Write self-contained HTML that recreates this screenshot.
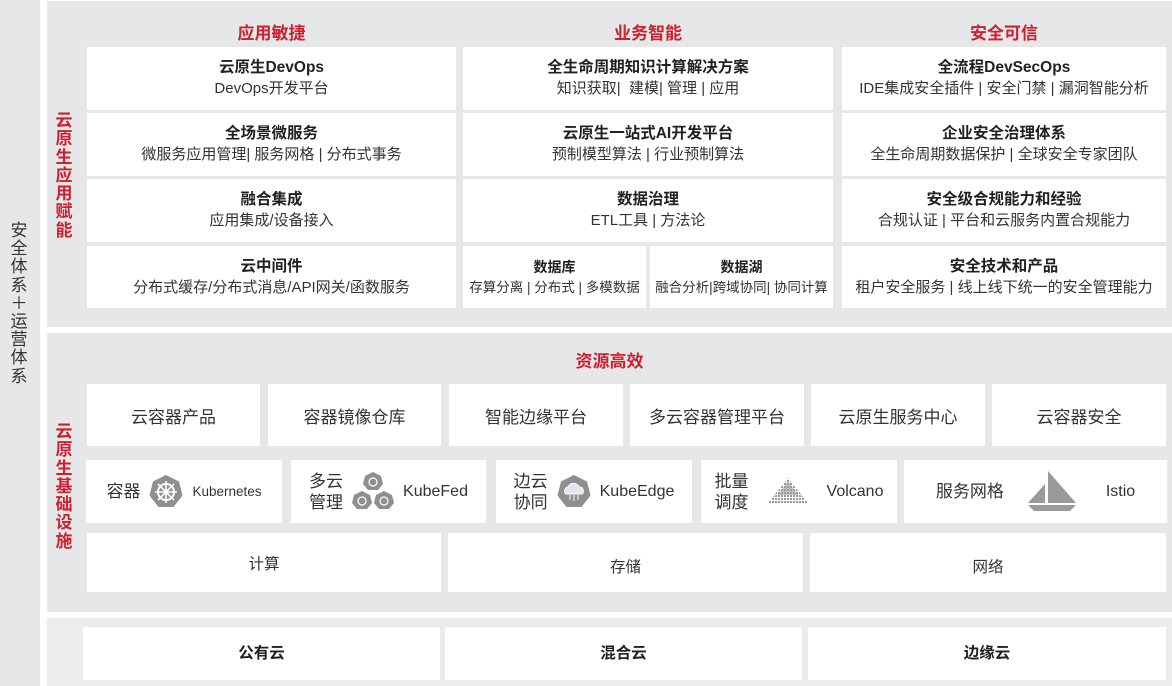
<!DOCTYPE html>
<html><head><meta charset="utf-8"><style>
*{margin:0;padding:0;box-sizing:border-box}
body{width:1172px;height:686px;background:#fff;position:relative;overflow:hidden;font-family:"Liberation Sans","Noto Sans CJK SC",sans-serif;color:#231f20}
.g{position:absolute;background:#e6e7e8}
.b{position:absolute;background:#fff;display:flex;flex-direction:column;align-items:center;justify-content:center;text-align:center;white-space:nowrap}
.t{font-weight:bold;font-size:15.5px;line-height:21px}
.s{font-size:15px;line-height:22px;color:#333}
.s2{font-size:13.5px;line-height:20px;color:#333}
.h{position:absolute;color:#cf1f2e;font-weight:bold;font-size:17px;text-align:center}
.v{position:absolute;width:22px;font-size:17px;line-height:18.3px;text-align:center}
.r{font-size:17px;color:#333}
.row{flex-direction:row;gap:8px}
.lb{font-size:17px;line-height:21px;color:#333;text-align:left}
.en{font-size:16px;color:#333}
</style></head><body>
<div class="g" style="left:0;top:0;width:40px;height:686px"></div>
<div class="v" style="left:8px;top:222px;color:#333;font-size:17px;line-height:18.2px">安全体系＋运营体系</div>
<div class="g" style="left:47px;top:1px;width:1125px;height:326px"></div>
<div class="g" style="left:47px;top:333px;width:1125px;height:279px"></div>
<div class="g" style="left:47px;top:618px;width:1125px;height:68px;background:#ececec"></div>
<div class="v" style="left:53px;top:112px;color:#cf1f2e;font-weight:bold">云原生应用赋能</div>
<div class="v" style="left:53px;top:423px;color:#cf1f2e;font-weight:bold">云原生基础设施</div>

<div class="h" style="left:87px;top:19px;width:369px">应用敏捷</div>
<div class="h" style="left:463px;top:19px;width:370px">业务智能</div>
<div class="h" style="left:842px;top:19px;width:324px">安全可信</div>

<div class="b" style="left:87px;top:47px;width:369px;height:63px"><div class="t">云原生DevOps</div><div class="s">DevOps开发平台</div></div>
<div class="b" style="left:87px;top:113px;width:369px;height:63px"><div class="t">全场景微服务</div><div class="s">微服务应用管理| 服务网格 | 分布式事务</div></div>
<div class="b" style="left:87px;top:179px;width:369px;height:63px"><div class="t">融合集成</div><div class="s">应用集成/设备接入</div></div>
<div class="b" style="left:87px;top:246px;width:369px;height:62px"><div class="t">云中间件</div><div class="s">分布式缓存/分布式消息/API网关/函数服务</div></div>

<div class="b" style="left:463px;top:47px;width:370px;height:63px"><div class="t">全生命周期知识计算解决方案</div><div class="s">知识获取|&nbsp; 建模| 管理 | 应用</div></div>
<div class="b" style="left:463px;top:113px;width:370px;height:63px"><div class="t">云原生一站式AI开发平台</div><div class="s">预制模型算法 | 行业预制算法</div></div>
<div class="b" style="left:463px;top:179px;width:370px;height:63px"><div class="t">数据治理</div><div class="s">ETL工具 | 方法论</div></div>
<div class="b" style="left:463px;top:246px;width:183px;height:62px"><div class="t" style="font-size:14px">数据库</div><div class="s2">存算分离 | 分布式 | 多模数据</div></div>
<div class="b" style="left:650px;top:246px;width:183px;height:62px"><div class="t" style="font-size:14px">数据湖</div><div class="s2">融合分析|跨域协同| 协同计算</div></div>

<div class="b" style="left:842px;top:47px;width:324px;height:63px"><div class="t">全流程DevSecOps</div><div class="s">IDE集成安全插件 | 安全门禁 | 漏洞智能分析</div></div>
<div class="b" style="left:842px;top:113px;width:324px;height:63px"><div class="t">企业安全治理体系</div><div class="s">全生命周期数据保护 | 全球安全专家团队</div></div>
<div class="b" style="left:842px;top:179px;width:324px;height:63px"><div class="t">安全级合规能力和经验</div><div class="s">合规认证 | 平台和云服务内置合规能力</div></div>
<div class="b" style="left:842px;top:246px;width:324px;height:62px"><div class="t">安全技术和产品</div><div class="s">租户安全服务 | 线上线下统一的安全管理能力</div></div>

<div class="h" style="left:47px;top:347px;width:1125px">资源高效</div>
<div class="b r" style="left:87px;top:384px;width:173px;height:62px">云容器产品</div>
<div class="b r" style="left:268px;top:384px;width:173px;height:62px">容器镜像仓库</div>
<div class="b r" style="left:449px;top:384px;width:174px;height:62px">智能边缘平台</div>
<div class="b r" style="left:630px;top:384px;width:174px;height:62px">多云容器管理平台</div>
<div class="b r" style="left:811px;top:384px;width:174px;height:62px">云原生服务中心</div>
<div class="b r" style="left:992px;top:384px;width:174px;height:62px">云容器安全</div>

<div class="b row" style="left:86px;top:460px;width:196px;height:63px"><span class="lb">容器</span>
<svg width="36" height="36" viewBox="0 0 36 36"><polygon points="18,1 31,7.5 34.5,21.5 25.5,33 10.5,33 1.5,21.5 5,7.5" fill="#8f8f8f"/><circle cx="18" cy="18" r="8" fill="none" stroke="#fff" stroke-width="2"/><g stroke="#fff" stroke-width="1.6"><line x1="18" y1="7" x2="18" y2="29"/><line x1="7" y1="18" x2="29" y2="18"/><line x1="10" y1="10" x2="26" y2="26"/><line x1="26" y1="10" x2="10" y2="26"/></g><circle cx="18" cy="18" r="2.5" fill="#fff"/></svg>
<span style="font-size:13.5px;color:#333">Kubernetes</span></div>
<div class="b row" style="left:291px;top:460px;width:195px;height:63px"><span class="lb">多云<br>管理</span>
<svg width="44" height="42" viewBox="0 0 44 42"><g fill="#8f8f8f"><polygon points="22,1 30,5 32,13 27,19 17,19 12,13 14,5"/><polygon points="11,20 19,24 21,32 16,38 6,38 1,32 3,24"/><polygon points="33,20 41,24 43,32 38,38 28,38 23,32 25,24"/></g><g fill="none" stroke="#fff" stroke-width="1.2"><circle cx="22" cy="11" r="4"/><circle cx="11" cy="30" r="4"/><circle cx="33" cy="30" r="4"/></g></svg>
<span class="en">KubeFed</span></div>
<div class="b row" style="left:496px;top:460px;width:196px;height:63px"><span class="lb">边云<br>协同</span>
<svg width="36" height="36" viewBox="0 0 36 36"><polygon points="18,1 31,7.5 34.5,21.5 25.5,33 10.5,33 1.5,21.5 5,7.5" fill="#8f8f8f"/><path d="M10 20a4 4 0 0 1 2-7 6 6 0 0 1 11 0 4 4 0 0 1 3 7z" fill="#dfe6ee" stroke="#fff"/><g stroke="#fff" stroke-width="1"><line x1="14" y1="21" x2="14" y2="26"/><line x1="18" y1="21" x2="18" y2="27"/><line x1="22" y1="21" x2="22" y2="26"/></g></svg>
<span class="en">KubeEdge</span></div>
<div class="b row" style="left:701px;top:460px;width:196px;height:63px;gap:14px"><span class="lb">批量<br>调度</span>
<svg width="50" height="30" viewBox="0 0 50 30"><defs><pattern id="d" width="3" height="3" patternUnits="userSpaceOnUse"><rect width="2" height="2" fill="#999"/></pattern></defs><polygon points="25,1 46,27 4,27" fill="url(#d)"/><polygon points="25,4 35,18 15,18" fill="#999" opacity=".6"/></svg>
<span class="en">Volcano</span></div>
<div class="b row" style="left:904px;top:460px;width:263px;height:63px;gap:22px"><span class="lb">服务网格</span>
<svg width="52" height="42" viewBox="0 0 52 42"><polygon points="22,0 22,32 50,32" fill="#9a9a9a"/><polygon points="19,13 19,32 2,32" fill="#9a9a9a"/><polygon points="2,34 50,34 44,40 8,40" fill="#9a9a9a"/></svg>
<span class="en" style="margin-left:6px">Istio</span></div>

<div class="b" style="left:87px;top:533px;width:354px;height:59px;font-size:15.5px;color:#333">计算</div>
<div class="b" style="left:448px;top:533px;width:355px;height:59px;font-size:15.5px;color:#333;padding-top:6px">存储</div>
<div class="b" style="left:810px;top:533px;width:356px;height:59px;font-size:15.5px;color:#333;padding-top:6px">网络</div>

<div class="b t" style="left:83px;top:627px;width:357px;height:53px">公有云</div>
<div class="b t" style="left:445px;top:627px;width:357px;height:53px">混合云</div>
<div class="b t" style="left:808px;top:627px;width:358px;height:53px">边缘云</div>
</body></html>
